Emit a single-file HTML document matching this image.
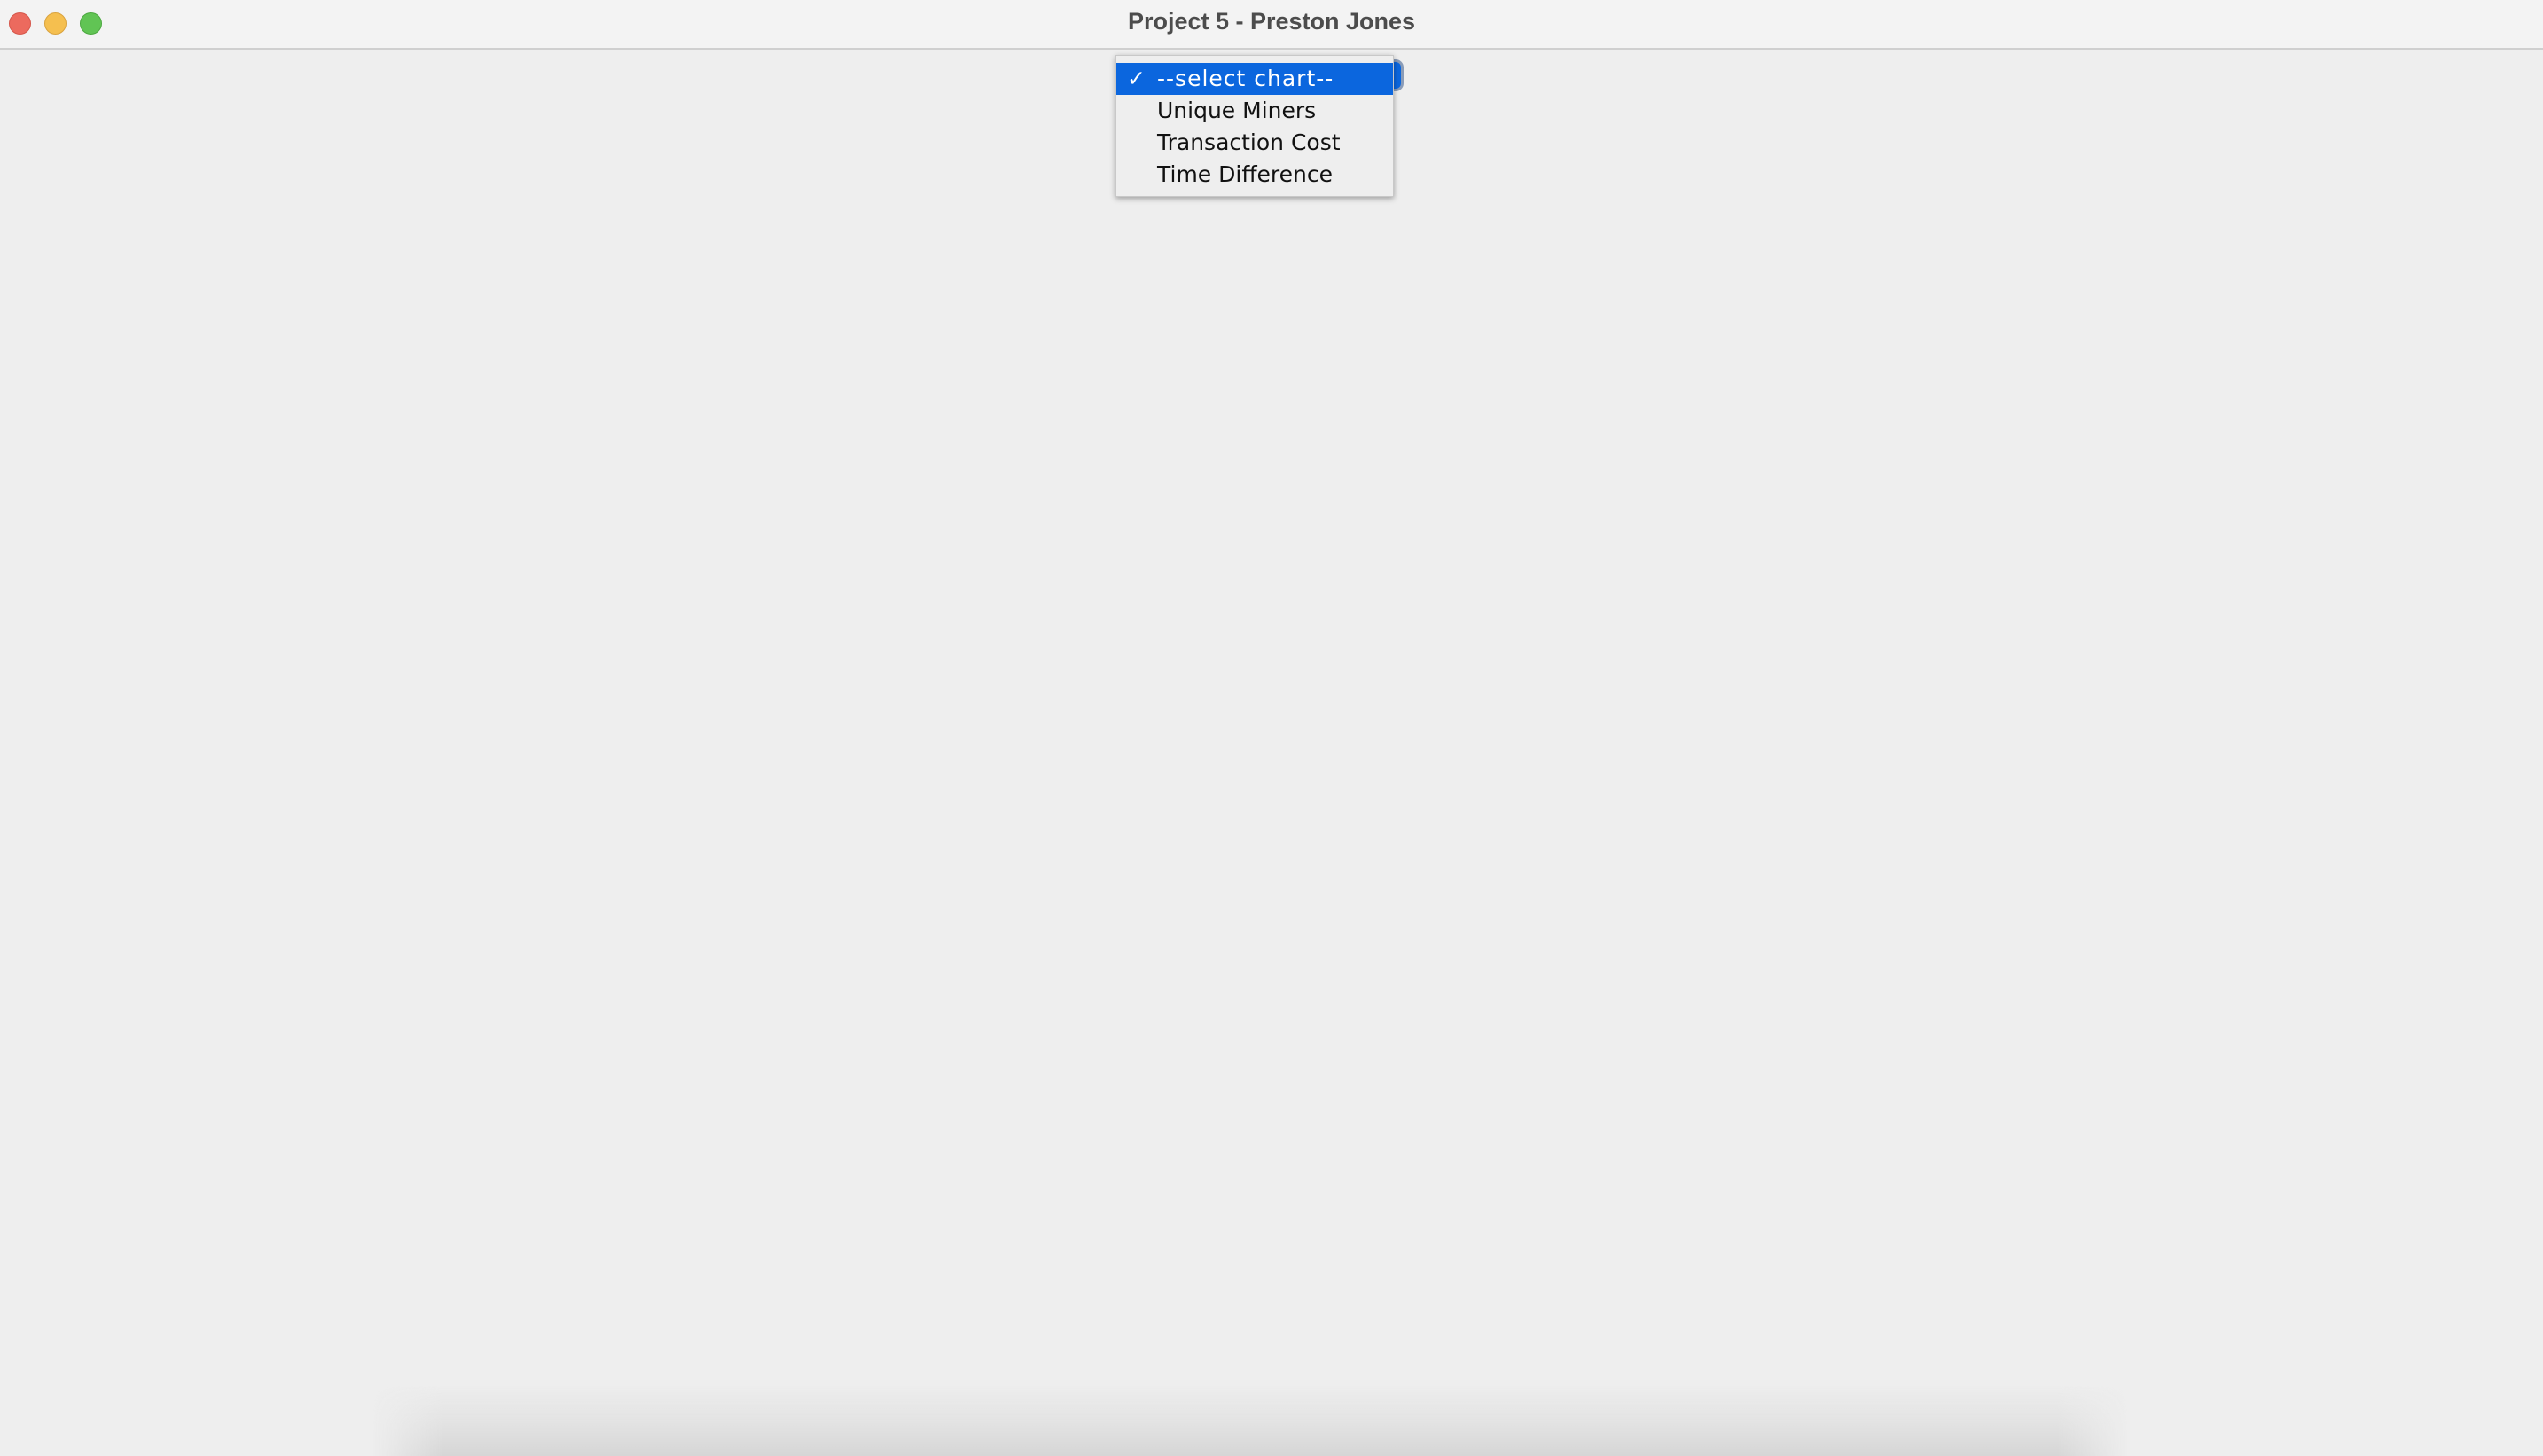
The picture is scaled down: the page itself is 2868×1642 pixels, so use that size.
<!DOCTYPE html>
<html><head><meta charset="utf-8"><style>
html,body{margin:0;padding:0;width:2868px;height:1642px;overflow:hidden;background:#eeeeee;font-family:"Liberation Sans",sans-serif;}
.wrap{position:relative;width:2868px;height:1642px;overflow:hidden;}
.tb{position:absolute;left:0;top:0;width:2868px;height:54px;background:#f3f3f3;border-bottom:2px solid #cfcfcf;}
.dot{position:absolute;top:14px;width:23px;height:23px;border-radius:50%;}
.title{position:absolute;left:0;width:2868px;top:9px;text-align:center;font-weight:bold;font-size:27px;color:#4c4c4c;}
.combo{position:absolute;left:1262px;top:67px;width:321px;height:36px;border-radius:9px;background:#0b66de;border:3px solid #8a9cb8;box-sizing:border-box;}
.pop{position:absolute;left:1258px;top:62px;width:314px;height:160px;background:#eeeeee;box-shadow:0 2px 6px rgba(0,0,0,0.35);border:1px solid #c8c8c8;box-sizing:border-box;}
.row{position:absolute;left:0;width:312px;height:36px;font-family:"DejaVu Sans",sans-serif;font-size:25px;line-height:36px;color:#111;}
.row span{position:absolute;left:46px;}
.sel{background:#0b66de;color:#fff;}
.shadow{position:absolute;left:420px;width:1980px;top:1562px;height:80px;background:linear-gradient(#eeeeee00,#e2e2e2 55%,#d6d6d6);-webkit-mask-image:linear-gradient(90deg,transparent,#000 4%,#000 96%,transparent);mask-image:linear-gradient(90deg,transparent,#000 4%,#000 96%,transparent);}
</style></head><body><div class="wrap">
<div class="shadow"></div>
<div class="tb">
<div class="dot" style="left:10px;background:#ec6a5e;border:1px solid #d5564a;"></div>
<div class="dot" style="left:50px;background:#f5bf4f;border:1px solid #d9a23d;"></div>
<div class="dot" style="left:90px;background:#61c454;border:1px solid #4ca83f;"></div>
<div class="title">Project 5 - Preston Jones</div>
</div>
<div class="combo"></div>
<div class="pop">
<div class="row sel" style="top:8px;"><span style="left:12px;">✓</span><span style="letter-spacing:1px;">--select chart--</span></div>
<div class="row" style="top:44px;"><span>Unique Miners</span></div>
<div class="row" style="top:80px;"><span>Transaction Cost</span></div>
<div class="row" style="top:116px;"><span>Time Difference</span></div>
</div>
</div></body></html>
